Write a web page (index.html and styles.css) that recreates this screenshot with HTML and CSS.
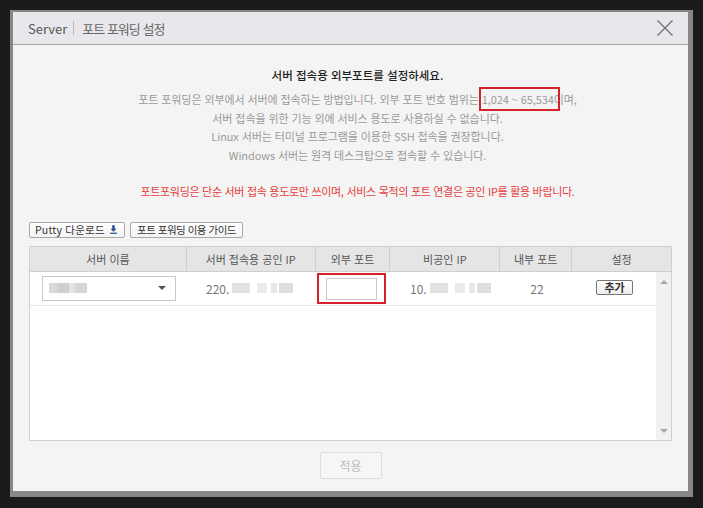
FILE: index.html
```html
<!DOCTYPE html>
<html lang="ko">
<head>
    <meta charset="UTF-8">
    <title>포트 포워딩 설정</title>
    <link rel="stylesheet" href="styles.css">
</head>
<body>
    <div class="modal">
        <div class="modal-head">
            <span class="head-server">Server</span>
            <span class="head-sep"></span>
            <span class="head-title">포트 포워딩 설정</span>
            <svg class="close" viewBox="0 0 16 16">
                <path d="M0.5 0.5L15.5 15.5M15.5 0.5L0.5 15.5" stroke="#6a6a6a" stroke-width="1.1" fill="none"/>
            </svg>
        </div>
        <div class="modal-body">
            <div class="intro">
                <p class="lead">서버 접속용 외부포트를 설정하세요.</p>
                <p class="desc">포트 포워딩은 외부에서 서버에 접속하는 방법입니다. 외부 포트 번호 범위는 <span class="mark">1,024 ~ 65,534</span>이며,<br>
                    서버 접속을 위한 기능 외에 서비스 용도로 사용하실 수 없습니다.<br>
                    Linux 서버는 터미널 프로그램을 이용한 SSH 접속을 권장합니다.<br>
                    Windows 서버는 원격 데스크탑으로 접속할 수 있습니다.</p>
                <p class="warn">포트포워딩은 단순 서버 접속 용도로만 쓰이며, 서비스 목적의 포트 연결은 공인 IP를 활용 바랍니다.</p>
            </div>
            <div class="tools">
                <button class="btn-putty">Putty 다운로드
                    <svg class="dl" viewBox="0 0 8 10">
                        <path d="M2.5 0H5.5V4H7.5L4 7.5L0.5 4H2.5Z" fill="#2b4f91"/>
                        <rect x="0" y="8.6" width="8" height="1.4" fill="#2b4f91"/>
                    </svg>
                </button>
                <button class="btn-guide">포트 포워딩 이용 가이드</button>
            </div>
            <div class="grid">
                <div class="grid-head">
                    <div class="col c1">서버 이름</div>
                    <div class="col c2">서버 접속용 공인 IP</div>
                    <div class="col c3">외부 포트</div>
                    <div class="col c4">비공인 IP</div>
                    <div class="col c5">내부 포트</div>
                    <div class="col c6">설정</div>
                </div>
                <div class="grid-body">
                    <div class="rows">
                        <div class="row">
                            <div class="cell c1">
                                <div class="select">
                                    <span class="blur b-name"><i></i><i></i><i></i><i></i></span>
                                    <span class="caret"></span>
                                </div>
                            </div>
                            <div class="cell c2 ip">220.<span class="blur b-ip"><i></i><i></i><i></i><i></i></span></div>
                            <div class="cell c3">
                                <div class="port-mark"><input class="port" type="text"></div>
                            </div>
                            <div class="cell c4 ip">10.<span class="blur b-ip"><i></i><i></i><i></i><i></i></span></div>
                            <div class="cell c5">22</div>
                            <div class="cell c6"><button class="btn-add">추가</button></div>
                        </div>
                    </div>
                    <div class="scroll">
                        <span class="arr up"></span>
                        <span class="arr down"></span>
                    </div>
                </div>
            </div>
            <div class="foot">
                <button class="btn-apply">적용</button>
            </div>
        </div>
    </div>
</body>
</html>
```

FILE: styles.css
```css
body {
    margin: 0;
    background-color: #1b1b1b;
    font-family: "Noto Sans CJK KR", "Noto Sans", sans-serif;
}

.modal {
    margin: 10px 0 0 10px;
    width: 675px;
    height: 479px;
    border-style: solid;
    border-color: #878787;
    border-width: 2px 5px 6px 3px;
    background-color: #f4f4f4;
    display: flex;
    flex-direction: column;
}

.modal-head {
    height: 32px;
    flex-shrink: 0;
    display: flex;
    align-items: center;
    padding: 0 15px;
    background-color: #e8e8ec;
    border-bottom: 1px solid #a3a3a3;
}
.head-server {
    font-size: 13px;
    color: #555;
}
.head-sep {
    width: 1px;
    height: 14px;
    margin: 0 8px 0 6px;
    background-color: #bdbdbd;
}
.head-title {
    font-size: 13px;
    color: #666;
    letter-spacing: -1px;
}
.close {
    margin-left: auto;
    width: 16px;
    height: 16px;
}

.modal-body {
    flex: 1;
    padding: 21px 16px 0;
}

.intro {
    padding-left: 14px;
    text-align: center;
}
.intro p {
    margin: 0;
}
.lead {
    font-size: 11.5px;
    font-weight: 500;
    line-height: 18px;
    color: #222;
}
.desc {
    margin-top: 6px !important;
    font-size: 11px;
    line-height: 18.7px;
    color: #9a9a9a;
    letter-spacing: -0.1px;
}
.mark {
    position: relative;
}
.mark::after {
    content: "";
    position: absolute;
    left: -3px;
    right: -6px;
    top: -4px;
    bottom: -4px;
    border: 2px solid #d3222c;
}
.warn {
    margin-top: 17px !important;
    font-size: 11px;
    line-height: 18px;
    color: #e5413d;
    letter-spacing: -0.3px;
}

.tools {
    display: flex;
    gap: 5px;
    margin-top: 22px;
}
.tools button {
    height: 16px;
    padding: 0 5px;
    display: flex;
    align-items: center;
    gap: 3px;
    font-family: inherit;
    font-size: 10.5px;
    color: #333;
    background: linear-gradient(#ffffff, #f3f3f3);
    border: 1px solid #a8a8a8;
    border-radius: 2px;
}
.btn-putty {
    width: 96px;
    letter-spacing: 0.2px;
}
.btn-guide {
    width: 113px;
    justify-content: center;
    letter-spacing: -0.5px;
}
.dl {
    width: 7px;
    height: 9px;
    margin-left: 2px;
}

.grid {
    margin-top: 8px;
    height: 193px;
    border: 1px solid #cfcfcf;
    background-color: #fff;
    display: flex;
    flex-direction: column;
    font-size: 11px;
    color: #555;
}
.grid-head {
    display: flex;
    height: 24px;
    background-color: #e5e5e5;
    border-bottom: 1px solid #cfcfcf;
}
.grid-head .col {
    display: flex;
    align-items: center;
    justify-content: center;
    border-right: 1px solid #cfcfcf;
    box-sizing: border-box;
}
.grid-head .col:last-child {
    border-right: 0;
}
.c1 { width: 157px; }
.c2 { width: 129px; }
.c3 { width: 75px; }
.c4 { width: 110px; }
.c5 { width: 72px; }
.c6 { width: 99px; }
.row .c6 { width: 83px; }

.grid-body {
    flex: 1;
    display: flex;
}
.rows {
    flex: 1;
}
.row {
    display: flex;
    height: 33px;
    border-bottom: 1px solid #e6e6e6;
}
.cell {
    display: flex;
    align-items: center;
    justify-content: center;
    font-size: 12px;
    color: #777;
}
.row .c1 {
    justify-content: flex-end;
    padding-right: 11px;
    box-sizing: border-box;
}
.select {
    width: 134px;
    height: 25px;
    box-sizing: border-box;
    border: 1px solid #c9c9c9;
    background-color: #fff;
    display: flex;
    align-items: center;
    padding: 0 9px 0 6px;
}
.caret {
    margin-left: auto;
    border-left: 4px solid transparent;
    border-right: 4px solid transparent;
    border-top: 4px solid #555;
}
.blur {
    display: inline-flex;
    align-items: center;
}
.blur i {
    display: inline-block;
    height: 10px;
    background-color: #e2e2e2;
}
.b-name i:nth-child(1) { width: 8px; background-color: #dadada; }
.b-name i:nth-child(2) { width: 12px; background-color: #cfcfcf; }
.b-name i:nth-child(3) { width: 6px; background-color: #e4e4e4; }
.b-name i:nth-child(4) { width: 12px; background-color: #d7d7d7; }
.b-ip i:nth-child(1) { width: 18px; margin-left: 3px; }
.b-ip i:nth-child(2) { width: 10px; margin-left: 7px; background-color: #ebebeb; }
.b-ip i:nth-child(3) { width: 6px; margin-left: 4px; background-color: #e8e8e8; }
.b-ip i:nth-child(4) { width: 14px; margin-left: 2px; background-color: #dedede; }
.ip {
    justify-content: flex-start;
}
.row .c2 { padding-left: 19px; box-sizing: border-box; }
.row .c4 { padding-left: 19px; box-sizing: border-box; }
.port-mark {
    border: 2px solid #d3222c;
    padding: 3px 7px 2px;
    margin-left: -4px;
}
.port {
    display: block;
    width: 51px;
    height: 22px;
    box-sizing: border-box;
    border: 1px solid #c9c9c9;
    background-color: #fff;
    outline: none;
    padding: 0;
}
.btn-add {
    width: 37px;
    height: 15px;
    margin-top: -2px;
    padding: 0;
    font-family: inherit;
    font-size: 11px;
    font-weight: bold;
    color: #333;
    background: linear-gradient(#ffffff, #eeeeee);
    border: 1px solid #777;
    border-radius: 2px;
    line-height: 13px;
}

.scroll {
    width: 16px;
    background-color: #f1f1f1;
    display: flex;
    flex-direction: column;
    justify-content: space-between;
    align-items: center;
    padding: 8px 0 7px;
}
.arr {
    width: 0;
    height: 0;
    border-left: 4px solid transparent;
    border-right: 4px solid transparent;
}
.arr.up {
    border-bottom: 4px solid #a9a9a9;
}
.arr.down {
    border-top: 4px solid #a9a9a9;
}

.foot {
    display: flex;
    justify-content: center;
    margin-top: 11px;
}
.btn-apply {
    width: 62px;
    height: 27px;
    font-family: inherit;
    font-size: 12px;
    color: #bcbcbc;
    background-color: #f6f6f6;
    border: 1px solid #dcdcdc;
    border-radius: 2px;
}
```
